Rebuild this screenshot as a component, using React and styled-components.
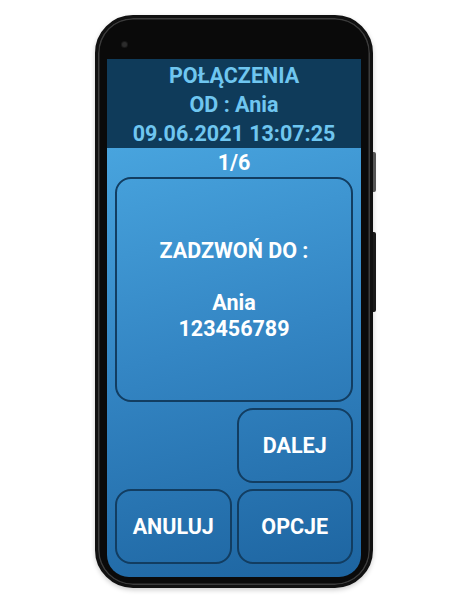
import React from 'react';
import styled, { createGlobalStyle } from 'styled-components';

const GlobalStyle = createGlobalStyle`
  html, body {
    margin: 0;
    padding: 0;
    background: #ffffff;
  }
  body {
    font-family: Roboto, "Liberation Sans", sans-serif;
  }
`;

const Page = styled.div`
  width: 469px;
  height: 610px;
  padding: 15px 0 0 95px;
  box-sizing: border-box;
`;

const Phone = styled.div`
  position: relative;
  width: 278px;
  height: 573px;
  box-sizing: border-box;
  padding: 41px 9px 8px 9px;
  border-radius: 38px;
  background: #0a0a0a;
  border: 3px solid #111111;
  box-shadow: inset 0 0 0 1.5px #3c3c3c, 0 2px 5px rgba(0, 0, 0, 0.2);
  display: flex;
`;

const Camera = styled.div`
  position: absolute;
  left: 24px;
  top: 24px;
  width: 5px;
  height: 5px;
  border-radius: 50%;
  background: #2c2c2c;
  box-shadow: 0 0 0 1px #1a1a1a;
`;

const SideButton = styled.div`
  position: absolute;
  right: -6px;
  top: ${p => p.top}px;
  width: 3px;
  height: ${p => p.len}px;
  border-radius: 0 2px 2px 0;
  background: ${p => p.color};
`;

const Screen = styled.div`
  flex: 1;
  display: flex;
  flex-direction: column;
  border-radius: 0 0 22px 22px;
  overflow: hidden;
`;

const Header = styled.div`
  background: #0f3b5a;
  padding: 2px 0 0;
  height: 89px;
  box-sizing: border-box;
  text-align: center;
  color: #6fc6f0;
  font-weight: 700;
  font-size: 21.5px;
  line-height: 29px;
`;

const Body = styled.div`
  flex: 1;
  background: linear-gradient(165deg, #48a4de 0%, #3486c4 45%, #1d64a0 100%);
  padding: 0 8px 12px;
  display: flex;
  flex-direction: column;
`;

const Counter = styled.div`
  text-align: center;
  color: #ffffff;
  font-weight: 700;
  font-size: 21.5px;
  line-height: 29px;
`;

const Grid = styled.div`
  display: grid;
  grid-template-columns: 1fr 1fr;
  grid-template-rows: 225px 75px 75px;
  column-gap: 5px;
  row-gap: 6px;
`;

const Tile = styled.div`
  grid-column: ${p => p.span ? '1 / span 2' : 'auto'};
  grid-column-start: ${p => p.col || 'auto'};
  border: 2px solid #123d61;
  border-radius: 16px;
  display: flex;
  flex-direction: column;
  align-items: center;
  justify-content: center;
  color: #ffffff;
  font-weight: 700;
  font-size: 21.5px;
  line-height: 26px;
  text-align: center;
`;

const Spacer = styled.div`
  height: 26px;
`;

export default function App() {
  return (
    <Page>
      <GlobalStyle />
      <Phone>
        <Camera />
        <SideButton top={134} len={40} color="#555555" />
        <SideButton top={214} len={80} color="#1a1a1a" />
        <Screen>
          <Header>
            <div>POŁĄCZENIA</div>
            <div>OD : Ania</div>
            <div>09.06.2021 13:07:25</div>
          </Header>
          <Body>
            <Counter>1/6</Counter>
            <Grid>
              <Tile span>
                <div>ZADZWOŃ DO :</div>
                <Spacer />
                <div>Ania</div>
                <div>123456789</div>
              </Tile>
              <Tile col={2}>DALEJ</Tile>
              <Tile>ANULUJ</Tile>
              <Tile>OPCJE</Tile>
            </Grid>
          </Body>
        </Screen>
      </Phone>
    </Page>
  );
}
